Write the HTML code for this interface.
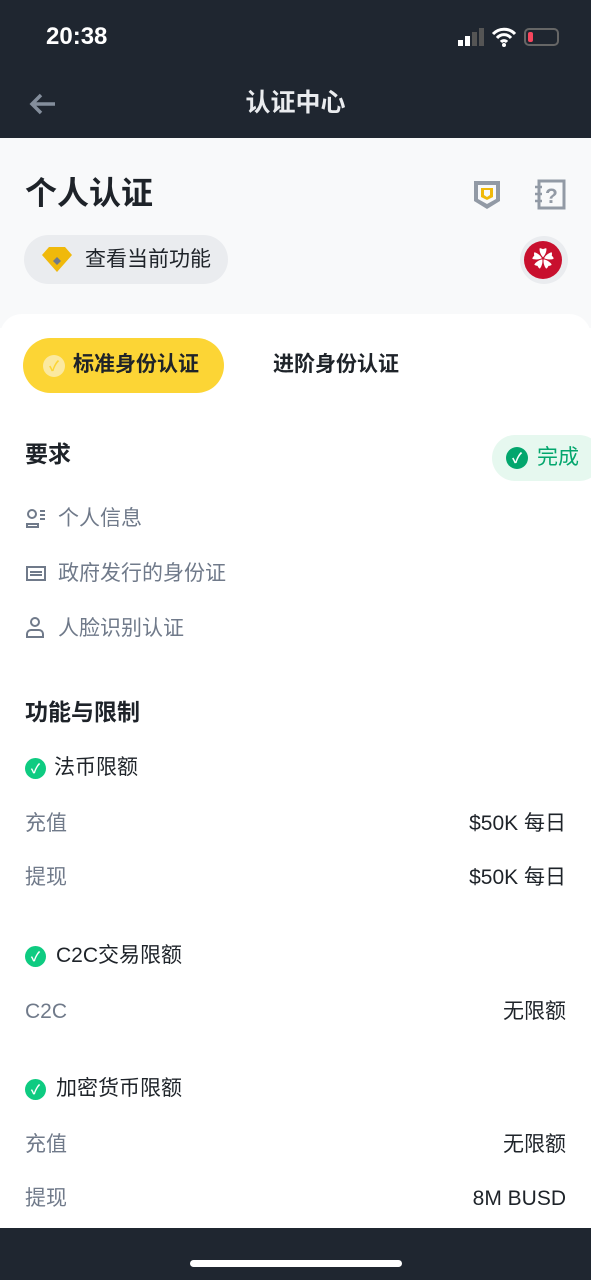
<!DOCTYPE html>
<html><head><meta charset="utf-8"><style>
*{margin:0;padding:0;box-sizing:border-box}
body{width:591px;height:1280px;overflow:hidden;background:#fff;font-family:"Liberation Sans","Noto Sans CJK SC",sans-serif;position:relative;color:#1e2329}
.a{position:absolute;line-height:30px}
.top{left:0;top:0;width:591px;height:138px;background:#1f2630}
.gray{left:0;top:138px;width:591px;height:190px;background:#f8f9fa}
.card{left:0;top:314px;width:591px;height:920px;background:#fff;border-radius:22px 22px 0 0}
.row{font-size:21px;color:#707a8a}
.r{right:25px;font-size:21px;color:#1e2329}
.h{font-size:23px;font-weight:bold;color:#1e2329}
.chk{width:21px;height:21px;border-radius:50%;background:#0ecb81;color:#fff;font-size:13px;line-height:21px;text-align:center;font-weight:bold}
</style></head><body>
<div class="a top"></div>
<div class="a" style="left:46px;top:22px;color:#fff;font-size:24px;font-weight:bold">20:38</div>
<div class="a" style="left:458px;top:40px;width:5px;height:6px;background:#fff"></div>
<div class="a" style="left:465px;top:36px;width:5px;height:10px;background:#fff"></div>
<div class="a" style="left:472px;top:32px;width:5px;height:14px;background:#555"></div>
<div class="a" style="left:479px;top:28px;width:5px;height:18px;background:#555"></div>
<svg class="a" style="left:490px;top:26px" width="28" height="22"><path d="M3 8a15 15 0 0 1 22 0M7 12a9 9 0 0 1 14 0M11 16a4 4 0 0 1 6 0" stroke="#fff" stroke-width="3" fill="none"/><circle cx="14" cy="19" r="2" fill="#fff"/></svg>
<div class="a" style="left:524px;top:28px;width:35px;height:18px;border:2px solid #666;border-radius:5px"></div>
<div class="a" style="left:528px;top:32px;width:5px;height:10px;background:#f6465d;border-radius:2px"></div>
<svg class="a" style="left:28px;top:92px" width="30" height="24"><path d="M27 12H4M13 3L4 12l9 9" stroke="#848e9c" stroke-width="3.5" fill="none"/></svg>
<div class="a" style="left:0;width:591px;top:88px;text-align:center;color:#eaecef;font-size:25px;font-weight:bold">认证中心</div>
<div class="a gray"></div>
<div class="a" style="left:25px;top:175px;font-size:32px;font-weight:bold;line-height:36px">个人认证</div>
<svg class="a" style="left:471px;top:178px" width="32" height="34"><path d="M3 3h26v20l-13 8-13-8z" fill="#929aa5"/><path d="M7 7h18v14l-9 5-9-5z" fill="#f8f9fa"/><path d="M10 10h12v9l-6 3-6-3z" fill="#f0b90b"/><path d="M13 12h6v5l-3 2-3-2z" fill="#f8f9fa"/></svg>
<svg class="a" style="left:533px;top:178px" width="34" height="34"><rect x="6" y="3" width="25" height="27" fill="none" stroke="#929aa5" stroke-width="3"/><path d="M2 9h7M2 16h7M2 23h7" stroke="#929aa5" stroke-width="2.5"/><text x="12" y="25" font-size="21" font-weight="bold" fill="#929aa5" font-family="Liberation Sans">?</text></svg>
<div class="a" style="left:24px;top:235px;width:204px;height:49px;border-radius:25px;background:#eaecef"></div>
<svg class="a" style="left:38px;top:244px" width="38" height="32"><path d="M4 11l7-8h16l7 8-15 17z" fill="#f0b90b"/><path d="M19 13l4 4-4 4-4-4z" fill="#707a8a"/></svg>
<div class="a" style="left:85px;top:245px;font-size:21px;color:#1e2329">查看当前功能</div>
<div class="a" style="left:520px;top:236px;width:48px;height:48px;border-radius:50%;background:#eaecef"></div>
<div class="a" style="left:524px;top:241px;width:38px;height:38px;border-radius:50%;background:#c8102e;color:#fff;text-align:center;font-size:22px;line-height:38px">✿</div>
<div class="a card"></div>
<div class="a" style="left:23px;top:338px;width:201px;height:55px;border-radius:28px;background:#fcd535"></div>
<div class="a" style="left:43px;top:355px;width:22px;height:22px;border-radius:50%;background:#fbe9a0;color:#fcd535;font-size:14px;line-height:22px;text-align:center;font-weight:bold">✓</div>
<div class="a" style="left:73px;top:350px;font-size:21px;font-weight:bold">标准身份认证</div>
<div class="a" style="left:273px;top:350px;font-size:21px;font-weight:bold">进阶身份认证</div>
<div class="a h" style="left:25px;top:439px">要求</div>
<div class="a" style="left:492px;top:435px;width:110px;height:46px;border-radius:23px;background:#e6f8ef"></div>
<div class="a" style="left:506px;top:447px;width:22px;height:22px;border-radius:50%;background:#03a66d;color:#fff;font-size:14px;line-height:22px;text-align:center;font-weight:bold">✓</div>
<div class="a" style="left:537px;top:443px;font-size:21px;color:#03a66d">完成</div>
<svg class="a" style="left:25px;top:508px" width="22" height="22"><circle cx="7" cy="6" r="4" fill="none" stroke="#707a8a" stroke-width="2"/><path d="M2 19v-3h11v3z" fill="none" stroke="#707a8a" stroke-width="2"/><path d="M15 3h5M15 7h5M15 11h5" stroke="#707a8a" stroke-width="2"/></svg>
<div class="a row" style="left:58px;top:504px">个人信息</div>
<div class="a" style="left:26px;top:566px;width:20px;height:15px;border:2px solid #707a8a"></div>
<div class="a" style="left:30px;top:571px;width:12px;height:5px;border-top:2px solid #707a8a;border-bottom:2px solid #707a8a"></div>
<div class="a row" style="left:58px;top:559px">政府发行的身份证</div>
<div class="a" style="left:30px;top:617px;width:10px;height:10px;border:2px solid #707a8a;border-radius:50%"></div>
<div class="a" style="left:26px;top:629px;width:18px;height:9px;border:2px solid #707a8a;border-radius:5px 5px 0 0"></div>
<div class="a row" style="left:58px;top:614px">人脸识别认证</div>
<div class="a h" style="left:25px;top:697px">功能与限制</div>
<div class="a chk" style="left:25px;top:758px">✓</div>
<div class="a" style="left:54px;top:753px;font-size:21px">法币限额</div>
<div class="a row" style="left:25px;top:809px">充值</div><div class="a r" style="top:809px">$50K 每日</div>
<div class="a row" style="left:25px;top:863px">提现</div><div class="a r" style="top:863px">$50K 每日</div>
<div class="a chk" style="left:25px;top:946px">✓</div>
<div class="a" style="left:56px;top:941px;font-size:21px">C2C交易限额</div>
<div class="a row" style="left:25px;top:997px">C2C</div><div class="a r" style="top:997px">无限额</div>
<div class="a chk" style="left:25px;top:1079px">✓</div>
<div class="a" style="left:56px;top:1074px;font-size:21px">加密货币限额</div>
<div class="a row" style="left:25px;top:1130px">充值</div><div class="a r" style="top:1130px">无限额</div>
<div class="a row" style="left:25px;top:1184px">提现</div><div class="a r" style="top:1184px">8M BUSD</div>
<div class="a" style="left:0;top:1228px;width:591px;height:52px;background:#1f2630"></div>
<div class="a" style="left:190px;top:1260px;width:212px;height:7px;border-radius:4px;background:#fff"></div>
</body></html>
